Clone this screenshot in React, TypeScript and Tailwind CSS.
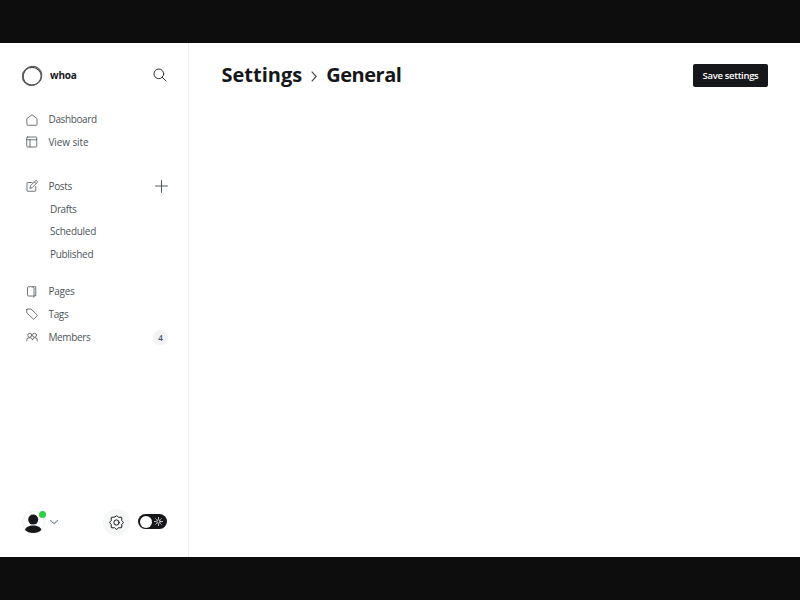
import type { ReactNode } from 'react';

function Icon({ children, size = 12, className = '' }: { children: ReactNode; size?: number; className?: string }) {
  return (
    <svg width={size} height={size} viewBox="0 0 24 24" fill="none" stroke="currentColor" strokeWidth="1.6" strokeLinecap="round" strokeLinejoin="round" className={`shrink-0 ${className}`}>
      {children}
    </svg>
  );
}

function Row({ icon, label, labelClass, end }: { icon: ReactNode; label: string; labelClass: string; end?: ReactNode }) {
  return (
    <li className="flex h-[22.6px] items-center pl-[25.5px] pr-5">
      {icon}
      <span className={`ml-[11px] ${labelClass}`}>{label}</span>
      {end && <span className="ml-auto flex">{end}</span>}
    </li>
  );
}

const gearPath =
  'M9.8 2.600 Q12 -.6 14.200 2.600 Q15.300 4.700 17.400 3.400 Q21.400 2.600 20.600 6.600 Q19.300 8.700 21.400 9.800 Q24.600 12 21.400 14.200 Q19.300 15.300 20.600 17.400 Q21.400 21.400 17.400 20.600 Q15.300 19.300 14.200 21.400 Q12 24.600 9.800 21.400 Q8.700 19.300 6.600 20.600 Q2.600 21.400 3.400 17.400 Q4.700 15.300 2.600 14.200 Q-.6 12 2.600 9.800 Q4.700 8.700 3.400 6.600 Q2.600 2.600 6.600 3.400 Q8.700 4.700 9.800 2.600 Z';

function Sidebar() {
  return (
    <nav className="flex w-[189px] shrink-0 flex-col border-r border-[#eceef0] text-[10px] text-[#4d545b]">
      <div className="flex h-[65px] items-center pl-[21px] pr-[21px] text-[#15171a]">
        <svg width="22" height="22" viewBox="0 0 22 22" fill="none" className="shrink-0">
          <ellipse cx="11" cy="11.200" rx="9.400" ry="8.800" stroke="#444" strokeWidth="1.200" />
          <ellipse cx="11.400" cy="10.600" rx="9" ry="9.800" stroke="#555" strokeWidth=".9" transform="rotate(35 11 11)" />
          <ellipse cx="11" cy="10.800" rx="10" ry="9.200" stroke="#666" strokeWidth=".9" transform="rotate(-50 11 11)" />
        </svg>
        <span className="ml-[7px] text-[10px] font-bold tracking-[-0.15px]">whoa</span>
        <Icon size={14} className="ml-auto mb-px text-[#222]">
          <circle cx="10" cy="10" r="8.300" />
          <path d="M16 16l6.500 6.500" />
        </Icon>
      </div>
      <ul className="pt-[0.5px]">
        <Row label="Dashboard" labelClass="tracking-[-0.37px]" icon={<Icon><path d="M2 9.200 12 1.500l10 7.700v12.300a1 1 0 0 1-1 1H3a1 1 0 0 1-1-1z" /></Icon>} />
        <Row label="View site" labelClass="tracking-[-0.1px]" icon={<Icon><rect x="1.500" y="2" width="20" height="20" rx="1.500" /><path d="M1.500 7.500h20M8 7.500V22" /></Icon>} />
      </ul>
      <ul className="mt-[21.5px]">
        <Row
          label="Posts"
          labelClass="tracking-[-0.35px]"
          icon={<Icon><path d="M12 5H3.500A1.500 1.500 0 0 0 2 6.500V21a1.500 1.500 0 0 0 1.500 1.500H18a1.500 1.500 0 0 0 1.500-1.500v-8" /><path d="m8 16 1.200-5L19 1.800a2.300 2.300 0 0 1 3.200 3.300L12.800 14.800zM17 4l3.200 3.200" /></Icon>}
          end={<Icon size={13} className="text-[#394047]"><path d="M12 1v22M1 11.100h22" /></Icon>}
        />
        <li className="flex h-[22.6px] items-center pl-[50px] tracking-[-0.38px]">Drafts</li>
        <li className="flex h-[22.6px] items-center pl-[50px] tracking-[-0.28px]">Scheduled</li>
        <li className="flex h-[22.6px] items-center pl-[50px] tracking-[-0.3px]">Published</li>
      </ul>
      <ul className="mt-[15px]">
        <Row label="Pages" labelClass="tracking-[-0.25px]" icon={<Icon><path d="M3 3a1.500 1.500 0 0 1 1.500-1.500H13l3 3v18l-3-2.500H4.500A1.500 1.500 0 0 1 3 18.500zM13 1.500h6.500v18H16" /></Icon>} />
        <Row label="Tags" labelClass="tracking-[-0.35px]" icon={<Icon><path d="M1.500 3.500v6.200L14 21.600a1.800 1.800 0 0 0 2.500 0l5.500-5.500a1.800 1.800 0 0 0 0-2.500L10 2H3a1.500 1.500 0 0 0-1.500 1.500z" /></Icon>} />
        <Row
          label="Members"
          labelClass="tracking-[-0.38px]"
          icon={<Icon><circle cx="7.500" cy="8.500" r="4" /><circle cx="17" cy="8.500" r="4" /><path d="M1.500 20v-1.500a5 5 0 0 1 5-5h2a5 5 0 0 1 4.500 4M13 17.500a5 5 0 0 1 4-4h1a4.500 4.500 0 0 1 4.500 5V20" /></Icon>}
          end={<span className="flex h-[15px] w-[15px] items-center justify-center rounded-full bg-[#f1f3f4] pt-px text-[8px] font-semibold">4</span>}
        />
      </ul>
      <div className="mt-auto flex h-[70px] items-center pl-[22px] pr-[21px]">
        <div className="relative h-[23px] w-[23px]">
          <svg width="23" height="23" viewBox="0 0 23 23">
            <circle cx="11.500" cy="11.500" r="11" fill="#fff" stroke="#eceef0" />
            <circle cx="11.200" cy="8.600" r="5" fill="#15171a" />
            <path d="M3 19c.7-3 4-4.500 8.200-4.500s7.500 1.500 8.200 4.500c-2 2-5 3-8.200 3s-6.200-1-8.200-3z" fill="#15171a" />
          </svg>
          <span className="absolute -right-[0.5px] top-0 h-[7px] w-[7px] rounded-full bg-[#30cf43]" />
        </div>
        <Icon size={8} className="ml-[5px] text-[#7c8b9a]"><path strokeWidth="3.500" d="m1 7 11 10L23 7" /></Icon>
        <span className="ml-auto flex h-[27px] w-[27px] items-center justify-center rounded-full bg-[#f6f8f8] text-[#15171a]">
          <Icon size={15}><path d={gearPath} /><circle cx="12" cy="12" r="4.200" /></Icon>
        </span>
        <span className="mb-px ml-2 flex h-[15px] w-[29px] items-center rounded-full bg-[#15171a] pl-[2px] text-white">
          <span className="h-[12px] w-[12px] rounded-full bg-white" />
          <svg width="9" height="9" viewBox="0 0 18 18" fill="none" stroke="currentColor" strokeWidth="1.600" strokeLinecap="round" className="ml-[2px]">
            <circle cx="9" cy="9" r="3.500" />
            <path d="M9 1v2M9 15v2M1 9h2M15 9h2M3.400 3.400l1.400 1.400M13.200 13.200l1.400 1.400M3.400 14.600l1.400-1.400M13.200 4.800l1.400-1.400" />
          </svg>
        </span>
      </div>
    </nav>
  );
}

export default function App() {
  return (
    <div className="flex h-[600px] w-[800px] flex-col overflow-hidden bg-[#0d0d0d] py-[43px] font-['Open_Sans','Noto_Sans',sans-serif]">
      <div className="flex h-[514px] bg-white">
        <Sidebar />
        <main className="flex-1 pl-[32.5px] pr-8">
          <header className="flex h-[65px] items-center justify-between">
            <h1 className="flex items-center pb-[2px] text-[20px] font-bold leading-6 text-[#15171a]">
              <span>Settings</span>
              <svg width="6" height="11" viewBox="0 0 6 11" fill="none" stroke="#394047" strokeWidth="1.100" className="mx-[9px] mt-[4px]"><path d="m.7.700 4.500 4.800-4.500 4.800" /></svg>
              <span className="tracking-[-0.48px]">General</span>
            </h1>
            <button className="h-[23px] w-[75px] whitespace-nowrap rounded-[2px] bg-[#15171a] pt-[2px] text-[9.500px] font-semibold tracking-[-0.32px] text-white">Save settings</button>
          </header>
        </main>
      </div>
    </div>
  );
}
